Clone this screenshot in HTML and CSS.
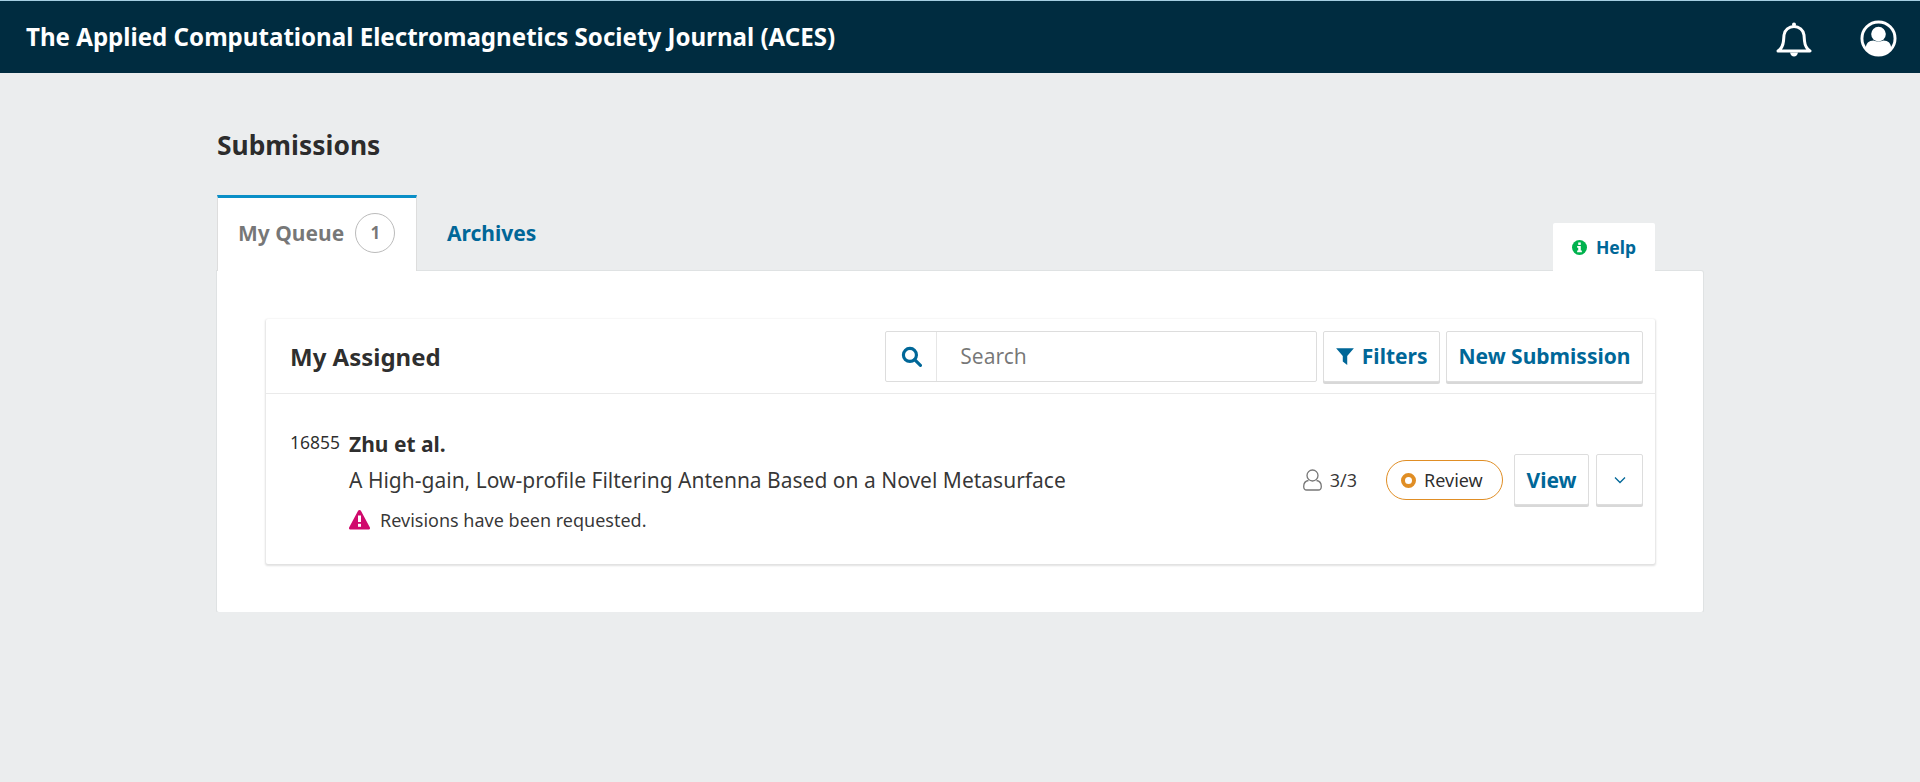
FILE: index.html
```html
<!DOCTYPE html>
<html>
<head>
    <title>Submissions - ACES</title>
    <link rel="stylesheet" href="styles.css">
</head>
<body>
    <header class="topbar">
        <a class="site-name" href="#">The Applied Computational Electromagnetics Society Journal (ACES)</a>
        <div class="top-icons">
            <svg class="bell" width="36" height="38" viewBox="0 0 36 38" fill="none" stroke="#fff" stroke-width="3" stroke-linejoin="round">
                <path d="M2 31c3-2 5-5 5.500-10l.5-6c.5-5 5-8.500 10-8.500s9.500 3.500 10 8.500l.5 6c.5 5 2.500 8 5.500 10z"/>
                <circle cx="18" cy="4.500" r="2" fill="#fff" stroke="none"/>
                <path d="M14 32.500c.5 2.500 2 4 4 4s3.500-1.500 4-4z" fill="#fff" stroke="none"/>
            </svg>
            <svg class="avatar" width="37" height="37" viewBox="0 0 38 38">
                <circle cx="19" cy="19" r="17" fill="none" stroke="#fff" stroke-width="3"/>
                <circle cx="19" cy="14.500" r="7.500" fill="#fff"/>
                <path d="M6 29c0-5 3-8 8-8 3 1.500 7 1.500 10 0 5 0 8 3 8 8-3 4-8 7-13 7s-10-3-13-7z" fill="#fff"/>
            </svg>
        </div>
    </header>

    <main class="page">
        <h1>Submissions</h1>

        <div class="tabs">
            <a class="tab active" href="#">My Queue <span class="count">1</span></a>
            <a class="tab" href="#">Archives</a>
            <a class="help" href="#">
                <svg width="15" height="15" viewBox="0 0 14 14">
                    <circle cx="7" cy="7" r="7" fill="#00b24e"/>
                    <rect x="5.800" y="2.300" width="2.400" height="2.300" fill="#fff"/>
                    <path d="M4.800 5.700h3.400v4.200h1v1.600H4.800V9.900h1V7.300h-1z" fill="#fff"/>
                </svg>
                Help
            </a>
        </div>

        <section class="panel">
            <div class="card">
                <div class="card-head">
                    <h2>My Assigned</h2>
                    <div class="search">
                        <span class="search-icon">
                            <svg width="21" height="21" viewBox="0 0 20 20" fill="none" stroke="#006798" stroke-width="3">
                                <circle cx="8.500" cy="8.500" r="6.200"/>
                                <path d="M13 13l5.500 5.500" stroke-linecap="round"/>
                            </svg>
                        </span>
                        <span class="search-text">Search</span>
                    </div>
                    <a class="btn" href="#">
                        <svg class="filter-icon" width="20" height="20" viewBox="0 0 18 18"><path d="M1 2h16l-6 7v8l-4-3V9z" fill="#006798"/></svg>
                        Filters
                    </a>
                    <a class="btn" href="#">New Submission</a>
                </div>

                <div class="row">
                    <div class="sub-id">16855</div>
                    <div class="sub-main">
                        <div class="author">Zhu et al.</div>
                        <div class="sub-title">A High-gain, Low-profile Filtering Antenna Based on a Novel Metasurface</div>
                        <div class="notice">
                            <svg width="21" height="20" viewBox="0 0 21 20">
                                <path d="M10.500 0c.6 0 1.100.3 1.400.8l9 16.600c.5 1-.2 2.100-1.400 2.100H1.500c-1.200 0-1.900-1.100-1.400-2.100l9-16.600c.3-.5.8-.8 1.400-.8z" fill="#d00a6c"/>
                                <rect x="9" y="5.500" width="3" height="6.500" fill="#fff"/>
                                <rect x="9" y="13.800" width="3" height="3" fill="#fff"/>
                            </svg>
                            Revisions have been requested.
                        </div>
                    </div>
                    <div class="reviews">
                        <svg width="19" height="22" viewBox="0 0 19 22" fill="none" stroke="#777" stroke-width="1.300">
                            <circle cx="9.500" cy="6.500" r="5.500"/>
                            <path d="M5.500 11.500c-3 .5-4.800 3-4.800 6 0 2 1 3.500 3 3.500h11.600c2 0 3-1.500 3-3.500 0-3-1.800-5.500-4.800-6"/>
                        </svg>
                        3/3
                    </div>
                    <div class="stage"><span class="stage-dot"></span>Review</div>
                    <a class="btn view" href="#">View</a>
                    <a class="btn more" href="#">
                        <svg width="12" height="8" viewBox="0 0 12 8" fill="none" stroke="#006798" stroke-width="1.300"><path d="M1 1.500l5 5 5-5"/></svg>
                    </a>
                </div>
            </div>
        </section>
    </main>
</body>
</html>
```

FILE: styles.css
```css
* {
  box-sizing: border-box;
}

body {
  margin: 0;
  background-color: #ebedee;
  color: rgba(0, 0, 0, 0.84);
  font-family: "Noto Sans", sans-serif;
  font-size: 16px;
}

a {
  color: #006798;
  text-decoration: none;
}

.topbar {
  height: 73px;
  background-color: #002c40;
  border-top: 1px solid #a5cfe2;
  display: flex;
  align-items: center;
  justify-content: space-between;
  padding: 0 23px 0 26px;
}

.site-name {
  color: #ffffff;
  font-size: 24.100px;
  font-weight: 700;
  margin-bottom: 2px;
}

.top-icons {
  display: flex;
  align-items: center;
  gap: 48px;
  padding-top: 3px;
}

.page {
  width: 1486px;
  margin-left: 217px;
}

h1 {
  margin: 0;
  padding-top: 56px;
  height: 122px;
  font-size: 26.400px;
  line-height: 33px;
  font-weight: 700;
}

.tabs {
  display: flex;
  height: 76px;
  align-items: stretch;
  position: relative;
}

.tab {
  display: flex;
  align-items: center;
  gap: 9px;
  padding: 0 21px 0 30px;
  font-size: 21px;
  font-weight: 700;
}

.tab.active {
  width: 200px;
  gap: 11px;
  padding: 0 0 4px 20px;
  background-color: #ffffff;
  border-top: 3px solid #0a8fc7;
  border-left: 1px solid #ddd;
  border-right: 1px solid #ddd;
  color: rgba(0, 0, 0, 0.54);
  position: relative;
  z-index: 1;
}

.count {
  width: 40px;
  height: 40px;
  border: 1px solid #bbb;
  border-radius: 50%;
  display: flex;
  align-items: center;
  justify-content: center;
  font-size: 17px;
}

.help {
  margin-left: auto;
  margin-right: 48px;
  margin-top: 28px;
  width: 102px;
  background-color: #ffffff;
  border-radius: 2px 2px 0 0;
  display: flex;
  align-items: center;
  justify-content: center;
  gap: 9px;
  font-size: 17.500px;
  font-weight: 700;
  position: relative;
  z-index: 1;
}

.panel {
  height: 341px;
  background-color: #ffffff;
  border-radius: 0 2px 2px 2px;
  box-shadow: 0 0 0 1px #dfe2e3;
  padding: 48px 48px 48px 49px;
}

.card {
  height: 245px;
  border-radius: 2px;
  box-shadow: 0 1px 2px 1px rgba(0, 0, 0, 0.12);
}

.card-head {
  height: 75px;
  border-bottom: 1px solid #eaeaea;
  display: flex;
  align-items: center;
  gap: 6px;
  padding: 0 12px 0 24px;
}

h2 {
  margin: 0 auto 0 0;
  font-size: 24px;
  font-weight: 700;
}

.search {
  width: 432px;
  height: 51px;
  border: 1px solid #ddd;
  border-radius: 2px;
  display: flex;
  align-items: center;
}

.search-icon {
  width: 51px;
  height: 100%;
  border-right: 1px solid #e6e6e6;
  display: flex;
  align-items: center;
  justify-content: center;
}

.search-text {
  padding-left: 23px;
  font-size: 21px;
  color: rgba(0, 0, 0, 0.54);
}

.btn {
  height: 51px;
  padding: 0 11.500px;
  background-color: #ffffff;
  border: 1px solid #ddd;
  border-radius: 2px;
  box-shadow: 0 2px 0 #d8d8d8;
  display: flex;
  align-items: center;
  gap: 8px;
  font-size: 21px;
  font-weight: 700;
  white-space: nowrap;
}

.filter-icon {
  margin-left: -1px;
  margin-right: -1px;
}

.row {
  display: flex;
  align-items: flex-start;
  padding: 34px 12px 0 24px;
}

.sub-id {
  width: 59px;
  font-size: 17.500px;
  line-height: 26px;
  margin-top: 1px;
}

.author {
  font-size: 21px;
  line-height: 32px;
  font-weight: 700;
}

.sub-title {
  margin-top: 3px;
  font-size: 21px;
  line-height: 34px;
  color: rgba(0, 0, 0, 0.8);
}

.notice {
  margin-top: 6px;
  display: flex;
  align-items: center;
  gap: 10px;
  font-size: 18px;
  line-height: 34px;
  color: rgba(0, 0, 0, 0.8);
}

.sub-main {
  margin-right: auto;
}

.reviews {
  margin-top: 29px;
  height: 46px;
  display: flex;
  align-items: center;
  gap: 8px;
  font-size: 18px;
  color: rgba(0, 0, 0, 0.8);
}

.stage {
  margin: 32px 11px 0 29px;
  width: 117px;
  height: 40px;
  padding: 0 16px 0 14px;
  border: 1px solid #e08e25;
  border-radius: 20px;
  display: flex;
  align-items: center;
  gap: 8px;
  font-size: 18px;
}

.stage-dot {
  flex: none;
  width: 15px;
  height: 15px;
  border: 4px solid #e08e25;
  border-radius: 50%;
}

.view {
  margin-top: 26px;
  width: 75px;
  justify-content: center;
  margin-right: 7px;
  font-size: 21px;
}

.more {
  margin-top: 26px;
  width: 47px;
  justify-content: center;
}
```
